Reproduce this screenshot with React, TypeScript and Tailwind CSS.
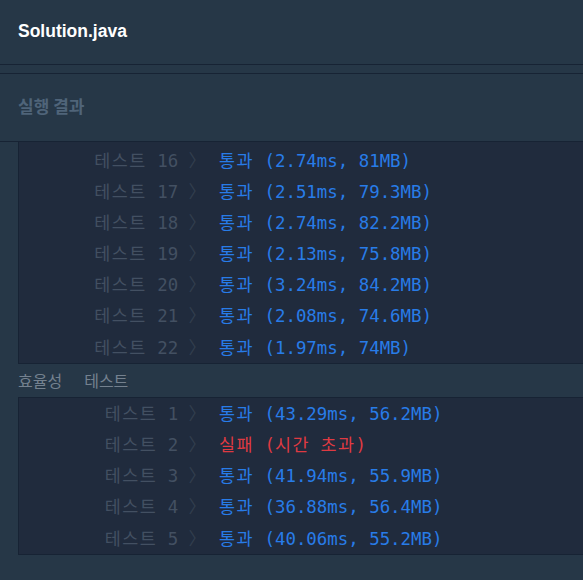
import React from "react";

const mono = { fontFamily: '"DejaVu Sans Mono", "Noto Sans CJK KR", monospace' };

type Row = { n: number; ok: boolean; text: React.ReactNode };

const H = ({ children }: { children: React.ReactNode }) => (
  <span className="tracking-[1.5px]">{children}</span>
);

const rows1: Row[] = [
  { n: 16, ok: true, text: "(2.74ms, 81MB)" },
  { n: 17, ok: true, text: "(2.51ms, 79.3MB)" },
  { n: 18, ok: true, text: "(2.74ms, 82.2MB)" },
  { n: 19, ok: true, text: "(2.13ms, 75.8MB)" },
  { n: 20, ok: true, text: "(3.24ms, 84.2MB)" },
  { n: 21, ok: true, text: "(2.08ms, 74.6MB)" },
  { n: 22, ok: true, text: "(1.97ms, 74MB)" },
];

const rows2: Row[] = [
  { n: 1, ok: true, text: "(43.29ms, 56.2MB)" },
  {
    n: 2,
    ok: false,
    text: (
      <>
        (<H>시간</H> <H>초과</H>)
      </>
    ),
  },
  { n: 3, ok: true, text: "(41.94ms, 55.9MB)" },
  { n: 4, ok: true, text: "(36.88ms, 56.4MB)" },
  { n: 5, ok: true, text: "(40.06ms, 55.2MB)" },
];

function ResultRow({ r }: { r: Row }) {
  return (
    <div className="flex h-[31.2px] items-center whitespace-pre text-[17.4px]" style={mono}>
      <div className="w-[187px] shrink-0 text-right">
        <span className="text-[#435062]">
          <H>테스트</H>
          {" " + r.n + " "}
        </span>
        <span className="text-[#323e4e]">〉</span>
      </div>
      <div className={"pl-[13px] " + (r.ok ? "text-[#287ce8]" : "text-[#df3a42]")}>
        <H>{r.ok ? "통과" : "실패"}</H>
        {" "}
        {r.text}
      </div>
    </div>
  );
}

export default function App() {
  return (
    <div className="min-h-[580px] w-full bg-[#263747]">
      <div
        className="flex h-[65px] items-center border-b border-[#172334] px-[18px] pb-[2px] text-[17.5px] font-bold text-white"
        style={{ fontFamily: '"Liberation Sans", Arial, sans-serif' }}
      >
        Solution.java
      </div>
      <div className="h-[9px] border-b border-[#172334]" />
      <div
        className="flex h-[68px] items-center border-b border-[#172334] px-[18px] pb-[4px] text-[17px] font-bold text-[#4f6479]"
        style={{ fontFamily: '"Noto Sans CJK KR", "Noto Sans", sans-serif' }}
      >
        실행 결과
      </div>
      <div className="ml-[18px] border-b border-l border-[#172334] bg-[#202b3d] pt-[3px]">
        {rows1.map((r) => (
          <ResultRow key={r.n} r={r} />
        ))}
      </div>
      <div
        className="flex h-[33px] items-center gap-[22px] px-[18px] pb-[1px] text-[16px] text-[#74818f]"
        style={{ fontFamily: '"Noto Sans CJK KR", sans-serif' }}
      >
        <span>효율성</span>
        <span>테스트</span>
      </div>
      <div className="ml-[18px] border-y border-l border-[#172334] bg-[#202b3d]">
        {rows2.map((r) => (
          <ResultRow key={r.n} r={r} />
        ))}
      </div>
    </div>
  );
}
